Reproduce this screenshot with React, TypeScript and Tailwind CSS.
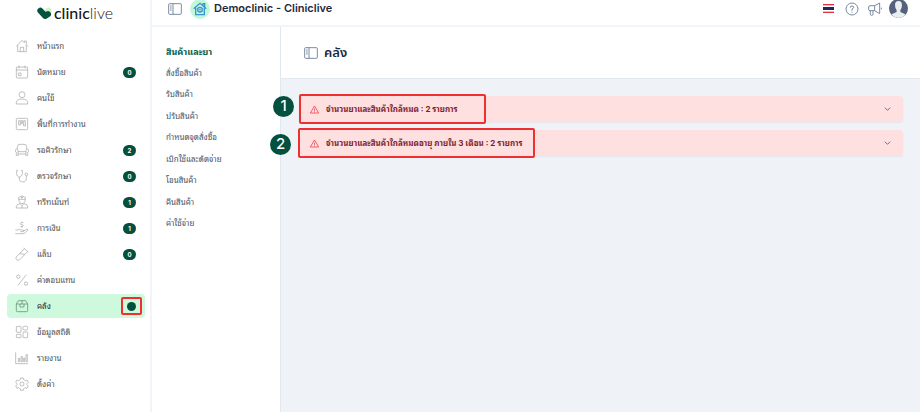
import type { ReactNode } from 'react';

interface MenuItem {
  label: string;
  icon: ReactNode;
  badge?: string;
  active?: boolean;
}

// Menu drawings share a 42x42 box
const menu: MenuItem[] = [
  { label: 'หน้าแรก', icon: <path d="M4 22 21 4l7 7V6h6v11l5 5M8 18v20h26V18M16 38V25h10v13" /> },
  {
    label: 'นัดหมาย',
    badge: '0',
    icon: <><rect x="4" y="6" width="34" height="33" rx="3" /><path d="M4 15h34M12 2v8M30 2v8" /><rect x="10" y="24" width="8" height="8" /></>,
  },
  { label: 'คนไข้', icon: <><circle cx="21" cy="11" r="9" /><path d="M4 39v-5c0-6 7-10 17-10s17 4 17 10v5z" /></> },
  {
    label: 'พื้นที่การทำงาน',
    icon: <><rect x="4" y="4" width="34" height="34" rx="3" /><path d="M11 11h5v13h-5zM19 11h4v9h-4zM26 11h5v16h-5z" /></>,
  },
  {
    label: 'รอคิวรักษา',
    badge: '2',
    icon: <><path d="M7 18V11q0-7 8-7h12q8 0 8 7v7" /><path d="M9 26v-3q0-5-4-5t-4 5q0 4 3 5v9h6v-4h22v4h6v-9q3-1 3-5 0-5-4-5t-4 5v3zM9 26v7M33 26v7" /></>,
  },
  {
    label: 'ตรวจรักษา',
    badge: '0',
    icon: <><path d="M9 4H5v10c0 6 4 10 8 10s9-4 9-10V4h-4M13 24v6c0 12 21 12 21-1V20" /><circle cx="34" cy="16" r="4" /></>,
  },
  {
    label: 'ทรีทเม้นท์',
    badge: '1',
    icon: <><path d="M11 13V7q10-8 20 0v6zM12 13v3c0 13 18 13 18 0v-3M21 5v5M18 8h6" /><path d="M4 39v-4q0-7 11-9l6 6 6-6q11 2 11 9v4zM21 32v7" /></>,
  },
  {
    label: 'การเงิน',
    badge: '1',
    icon: <><path d="M25 5h-5q-4 0-4 3t4 3q5 0 5 3t-4 3h-5M21 2v3M21 17v3" /><path d="M1 27h7q5-4 10 0h7q3 3-1 5h-8M24 31l11-6q5-1 4 2L27 38H1" /></>,
  },
  { label: 'แล็บ', badge: '0', icon: <><path d="M26 3 40 15M28 5 4 30q-3 5 1 8 4 4 9 0L38 14M14 20l15 2" /></> },
  { label: 'ค่าตอบแทน', icon: <><path d="M34 5 9 37" /><circle cx="10" cy="11" r="5" /><circle cx="33" cy="32" r="5" /></> },
  {
    label: 'คลัง',
    active: true,
    icon: <><path d="M4 15 10 5h22l6 10v20q0 3-3 3H7q-3 0-3-3zM4 15h34M21 5v10" /><path d="M15 15v9h12v-9" /></>,
  },
  {
    label: 'ข้อมูลสถิติ',
    icon: <><rect x="4" y="4" width="14" height="18" rx="2" /><rect x="24" y="4" width="14" height="11" rx="4" /><rect x="4" y="28" width="14" height="10" rx="2" /><rect x="24" y="21" width="14" height="17" rx="2" /></>,
  },
  {
    label: 'รายงาน',
    icon: <path d="M2 4v34h37M10 32V22h4v10zM18 32V17h4v15zM26 32V21h3v11zM33 32V11h4v21z" />,
  },
  {
    label: 'ตั้งค่า',
    icon: <><path d="m17 3-1 5q-3 1-5 3l-5-2-4 7 4 4v3l-4 4 4 7 5-2q2 2 5 3l1 5h8l1-5q3-1 5-3l5 2 4-7-4-4v-3l4-4-4-7-5 2q-2-2-5-3l-1-5z" /><circle cx="21" cy="21" r="6" /></>,
  },
];

const stockLinks = [
  'สั่งซื้อสินค้า',
  'รับสินค้า',
  'ปรับสินค้า',
  'กำหนดจุดสั่งซื้อ',
  'เบิกใช้และตัดจ่าย',
  'โอนสินค้า',
  'คืนสินค้า',
  'ค่าใช้จ่าย',
];

function PanelIcon() {
  return (
    <svg viewBox="0 0 42 36" className="h-3 w-3.5 text-slate-500" fill="none" stroke="currentColor" strokeWidth="2.5">
      <rect x="2" y="2" width="38" height="32" rx="3" />
      <path d="M15 2v32M6 9h5M6 15h5M6 21h5" />
    </svg>
  );
}

function Sidebar() {
  return (
    <aside className="w-[152px] shrink-0 border-r-2 border-slate-100 bg-white pt-1">
      <a href="#home" className="flex h-[18px] items-center justify-center gap-0.5 font-['Lato',sans-serif] text-[16px] leading-[18px] text-neutral-900">
        <svg viewBox="0 0 44 38" className="h-[13px] w-[15px] shrink-0" fill="none" strokeWidth="18" strokeLinecap="round">
          <path d="m34 11-4 4" stroke="#d0f3cc" />
          <path d="m10 11 14 15 8-5" stroke="#07513f" strokeLinejoin="round" />
        </svg>
        <span>
          <span className="font-medium">clinic</span><span className="font-light">live</span>
        </span>
      </a>

      <nav className="mt-3 flex flex-col gap-0.5 pl-[7px] pr-[5px]">
        {menu.map((item) => (
          <a
            key={item.label}
            href="#menu"
            className={`relative flex h-6 items-center rounded pl-2 pr-[9px] font-['Noto_Sans_Thai_Looped','Loma','Garuda','Waree','Noto_Serif_Thai','Noto_Sans_Thai',sans-serif] text-[8px] ${item.active ? 'bg-[#cff9dc] text-slate-800' : 'text-neutral-600'}`}
          >
            <svg
              viewBox="0 0 42 42"
              className={`mr-2 size-3.5 ${item.active ? 'text-[#50806c]' : 'text-neutral-400'}`}
              fill="none"
              stroke="currentColor"
              strokeWidth="2"
              strokeLinejoin="round"
            >
              {item.icon}
            </svg>
            <span className="flex-1">{item.label}</span>
            {item.badge && (
              <span className="flex h-[11px] w-[13px] items-center justify-center rounded-full bg-[#04503f] font-['Inter',sans-serif] text-[6px] font-bold text-white">
                {item.badge}
              </span>
            )}
            {item.active && (
              <span className="absolute right-[3px] top-[3px] flex h-[18px] w-[21px] items-center justify-center rounded-xs border-2 border-[#ee3030]">
                <span className="size-[9px] rounded-full bg-[#04503f]" />
              </span>
            )}
          </a>
        ))}
      </nav>
    </aside>
  );
}

function Header() {
  return (
    <header className="h-[27px] overflow-hidden border-b-2 border-slate-100 bg-white pl-4 pr-3">
      <div className="flex h-[17px] items-center">
        <button type="button" aria-label="Menu">
          <PanelIcon />
        </button>
        <span className="ml-2 flex size-5 shrink-0 items-center justify-center rounded-full bg-[#c3f7db]">
          <svg viewBox="0 0 42 42" className="size-3.5" fill="none" stroke="#3a94cf" strokeWidth="4">
            <path d="M2 20 21 4l19 16M8 17v21h26V17M30 11V5h5v10" />
            <circle cx="21" cy="23" r="7" />
            <path d="M21 20v6M18 23h6" strokeWidth="2" />
          </svg>
        </span>
        <h1 className="ml-1 text-[11px] font-semibold text-slate-800">Democlinic - Cliniclive</h1>

        <div className="ml-auto flex items-center">
          <button type="button" aria-label="ภาษาไทย">
            <svg viewBox="0 0 33 27" className="h-[9px] w-[11px]">
              <path d="M0 0h33v27H0z" fill="#e0303a" />
              <path d="M0 4h33v19H0z" fill="#fff" />
              <path d="M0 9h33v9H0z" fill="#20265f" />
            </svg>
          </button>
          <button type="button" aria-label="Help" className="ml-[11px] text-slate-500">
            <svg viewBox="0 0 42 42" className="size-3.5" fill="none" stroke="currentColor" strokeWidth="2.5">
              <circle cx="21" cy="21" r="18" />
              <path d="M16 17v-2q0-3 5-3t5 4q0 3-5 5v5M21 29v3" />
            </svg>
          </button>
          <button type="button" aria-label="News" className="ml-[9px] text-slate-500">
            <svg viewBox="0 0 42 42" className="size-3.5" fill="none" stroke="currentColor" strokeWidth="2.5" strokeLinejoin="round">
              <path d="M20 11H6q-4 0-4 4v7q0 4 4 4h14l15 9V3zM20 11v15M7 26v11q0 3 4 3t4-3V26M40 17v5" />
            </svg>
          </button>
          <button type="button" aria-label="Account" className="ml-[7px]">
            <svg viewBox="0 0 60 60" className="size-[19px]">
              <circle cx="30" cy="30" r="30" fill="#56607f" />
              <path d="M19 19Q19 6 30 6t11 13q0 11-5 16v6l14 6q1 1 1 4-20 18-42 0 0-3 1-4l14-6v-6q-5-5-5-16z" fill="#e9eeee" />
            </svg>
          </button>
        </div>
      </div>
    </header>
  );
}

interface StockAlertProps {
  step: number;
  text: string;
}

function StockAlert({ step, text }: StockAlertProps) {
  const first = step === 1;
  return (
    <section className="relative rounded bg-[#fee0e1] shadow-xs">
      <button type="button" className="flex h-[26px] w-full items-center pl-[11px] pr-3 text-left font-['Inter','Noto_Sans_Thai_Looped','Loma','Garuda','Waree','Noto_Serif_Thai','Noto_Sans_Thai',sans-serif] text-[8px] font-bold text-[#7f1d2d]">
        <span className="relative flex items-center">
          <svg viewBox="0 0 28 28" className="mr-[7px] size-[9px] text-[#ee3f48]" fill="none" stroke="currentColor" strokeWidth="2.5" strokeLinejoin="round">
            <path d="M14 3 27 25H1zM14 11v7M14 20v3" />
          </svg>
          {text}
          <span
            className={
              first
                ? 'absolute -inset-y-[9px] -left-[11px] -right-7 rounded-xs border-2 border-[#ee3030]'
                : 'absolute -inset-y-[9px] -left-3 -right-3 rounded-xs border-2 border-[#ee3030]'
            }
          />
        </span>
        <svg viewBox="0 0 18 12" className="ml-auto h-1 w-[7px] text-slate-500" fill="none" stroke="currentColor" strokeWidth="3">
          <path d="m1 2 8 8 8-8" />
        </svg>
      </button>
      <span
        className={`absolute flex size-[21px] items-center justify-center rounded-full bg-[#04503f] text-[15px] font-medium text-white ${first ? '-left-[26px] top-0' : '-left-[29px] top-1'}`}
      >
        {step}
      </span>
    </section>
  );
}

export default function App() {
  return (
    <div className="flex min-h-screen bg-[#eff3f8] font-['Inter','Noto_Sans_Thai','Noto_Sans',sans-serif]">
      <Sidebar />
      <div className="flex min-w-0 flex-1 flex-col">
        <Header />
        <div className="flex flex-1">
          <nav className="w-[129px] shrink-0 border-r border-slate-200 bg-white pl-3.5 pt-[18px] font-['Noto_Sans_Thai_Looped','Loma','Garuda','Waree','Noto_Serif_Thai','Noto_Sans_Thai',sans-serif]">
            <div className="flex h-[184px] flex-col justify-between text-[8px] leading-3 text-slate-600">
              <a href="#stock" className="text-[9px] font-bold text-[#04604a]">สินค้าและยา</a>
              {stockLinks.map((link) => (
                <a key={link} href="#stock">{link}</a>
              ))}
            </div>
          </nav>

          <main className="min-w-0 flex-1">
            <div className="flex h-[52px] items-center gap-1.5 border-b border-slate-200 bg-white pl-[23px]">
              <PanelIcon />
              <h2 className="text-[13px] font-semibold text-slate-800">คลัง</h2>
            </div>
            <div className="flex flex-col gap-2 py-[17px] pl-[18px] pr-[17px]">
              <StockAlert step={1} text="จำนวนยาและสินค้าใกล้หมด : 2 รายการ" />
              <StockAlert step={2} text="จำนวนยาและสินค้าใกล้หมดอายุ ภายใน 3 เดือน : 2 รายการ" />
            </div>
          </main>
        </div>
      </div>
    </div>
  );
}
